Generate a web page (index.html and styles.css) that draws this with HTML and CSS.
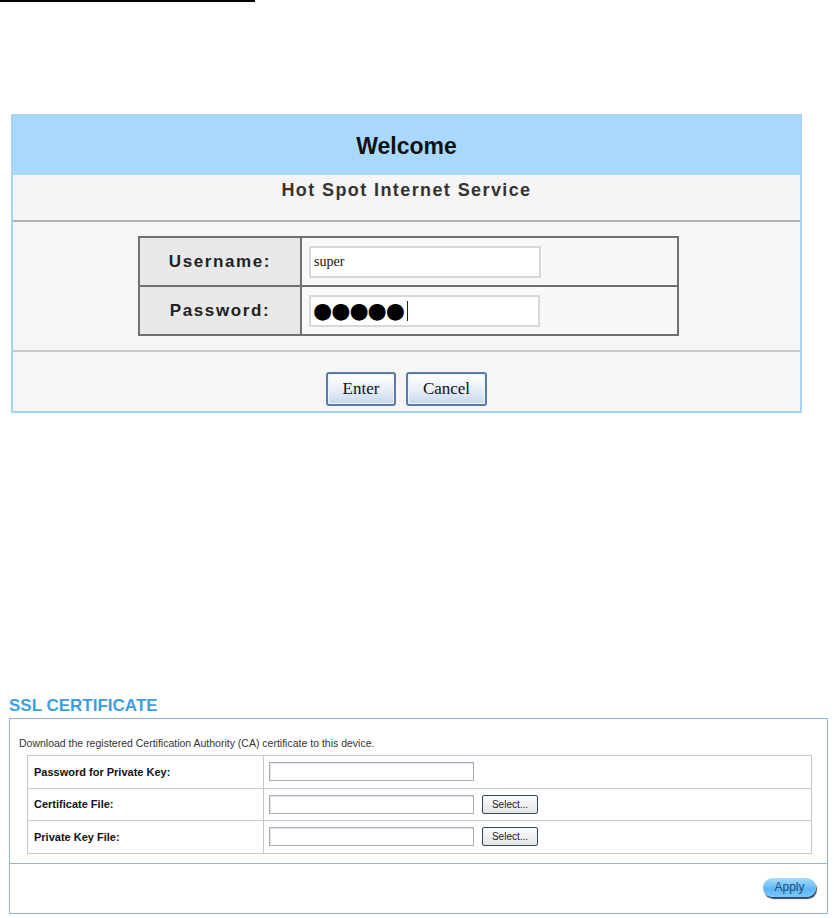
FILE: index.html
```html
<!DOCTYPE html>
<html>
  <head>
    <meta charset="UTF-8">
    <link rel="stylesheet" href="styles.css">
  </head>
  <body>
    <div class="top-rule"></div>

    <div class="login-box">
      <div class="login-head">Welcome</div>
      <div class="login-sub">Hot Spot Internet Service</div>
      <div class="login-body">
        <table class="login-table">
          <tr>
            <td class="login-label">Username:</td>
            <td class="login-field"><div class="fake-input">super</div></td>
          </tr>
          <tr>
            <td class="login-label">Password:</td>
            <td class="login-field"><div class="fake-input pw"><span class="dots">&#9679;&#9679;&#9679;&#9679;&#9679;</span><span class="caret"></span></div></td>
          </tr>
        </table>
      </div>
      <div class="login-foot">
        <button class="btn btn-enter">Enter</button>
        <button class="btn btn-cancel">Cancel</button>
      </div>
    </div>

    <div class="ssl-title">SSL CERTIFICATE</div>
    <div class="ssl-box">
      <div class="ssl-body">
        <div class="ssl-desc">Download the registered Certification Authority (CA) certificate to this device.</div>
        <table class="ssl-table">
          <tr>
            <td class="ssl-label">Password for Private Key:</td>
            <td class="ssl-field"><div class="ssl-input"></div></td>
          </tr>
          <tr>
            <td class="ssl-label">Certificate File:</td>
            <td class="ssl-field"><div class="ssl-input"></div><button class="ssl-select">Select...</button></td>
          </tr>
          <tr>
            <td class="ssl-label">Private Key File:</td>
            <td class="ssl-field"><div class="ssl-input"></div><button class="ssl-select">Select...</button></td>
          </tr>
        </table>
      </div>
      <div class="ssl-foot">
        <button class="apply">Apply</button>
      </div>
    </div>
  </body>
</html>
```

FILE: styles.css
```css
body {
  margin: 0;
  background: white;
  font-family: "Liberation Sans", Arial, sans-serif;
  color: #111;
}
.top-rule {
  width: 255px;
  height: 2px;
  background: black;
}

/* hot spot login */
.login-box {
  margin: 112px 0 0 11px;
  width: 787px;
  border: 2px solid #a6d4f7;
  background: #f6f6f6;
}
.login-head {
  height: 59px;
  line-height: 60px;
  background: #a8d8fb;
  text-align: center;
  font-size: 23px;
  font-weight: bold;
  color: #111;
}
.login-sub {
  height: 45px;
  line-height: 30px;
  text-align: center;
  font-size: 18px;
  letter-spacing: 1.4px;
  font-weight: bold;
  color: #333;
  background: #f5f5f5;
  border-bottom: 2px solid #b0b0b0;
}
.login-body {
  padding: 14px 0 14px;
  border-bottom: 2px solid #c8c8c8;
}
.login-table {
  margin: 0 auto 0 125px;
  width: 541px;
  border-collapse: collapse;
  border: 2px solid #707070;
}
.login-table td {
  border: 2px solid #707070;
  height: 47px;
  padding: 0;
}
.login-label {
  width: 160px;
  background: #e8e8e8;
  text-align: center;
  font-size: 17px;
  letter-spacing: 1.6px;
  font-weight: bold;
  color: #222;
}
.login-field {
  background: #f8f8f8;
  padding-left: 7px !important;
}
.fake-input {
  width: 225px;
  height: 28px;
  line-height: 28px;
  border: 2px solid #d8d8d8;
  background: white;
  padding-left: 3px;
  font-family: "Liberation Serif", serif;
  font-size: 14px;
  color: #111;
  display: flex;
  align-items: center;
}
.fake-input.pw {
  padding-left: 2px;
}
.dots {
  font-size: 22px;
  letter-spacing: -1px;
  color: black;
  font-family: "DejaVu Sans", sans-serif;
}
.caret {
  display: inline-block;
  width: 1px;
  height: 20px;
  background: #222;
  margin-left: 3px;
}
.login-foot {
  height: 59px;
  display: flex;
  justify-content: center;
  align-items: flex-start;
  gap: 10px;
  padding-top: 20px;
  box-sizing: border-box;
}
.btn {
  height: 34px;
  border: 2px solid #5a7aa8;
  border-radius: 3px;
  background: linear-gradient(#ffffff, #e6edf7 55%, #c6d6ec);
  font-family: "Liberation Serif", serif;
  font-size: 17px;
  color: #111;
  padding: 0;
  box-shadow: inset 0 0 0 1px #eef3fa;
}
.btn-enter {
  width: 70px;
}
.btn-cancel {
  width: 81px;
}

/* ssl certificate */
.ssl-title {
  margin: 283px 0 2px 9px;
  font-size: 17px;
  line-height: 20px;
  font-weight: bold;
  color: #3f9ee2;
}
.ssl-box {
  margin-left: 9px;
  width: 817px;
  border: 1px solid #8cb6dc;
}
.ssl-body {
  padding: 18px 15px 9px 9px;
  border-bottom: 1px solid #8cb6dc;
}
.ssl-desc {
  font-size: 10.5px;
  line-height: 12px;
  color: #333;
  margin-bottom: 6px;
}
.ssl-table {
  margin-left: 8px;
  width: 785px;
  border-collapse: collapse;
  border: 1px solid #c8c8c8;
}
.ssl-table td {
  border: 1px solid #c8c8c8;
  height: 31.5px;
  padding: 0;
}
.ssl-label {
  width: 229px;
  padding-left: 6px !important;
  font-size: 11px;
  font-weight: bold;
  color: #111;
}
.ssl-field {
  padding-left: 5px !important;
}
.ssl-field > * {
  vertical-align: middle;
}
.ssl-input {
  display: inline-block;
  width: 203px;
  height: 17px;
  border: 1px solid #a5adb8;
  background: white;
  box-shadow: inset 1px 1px 0 #e2e6ea;
}
.ssl-select {
  margin-left: 8px;
  width: 56px;
  height: 19px;
  border: 1px solid #33465e;
  border-radius: 2px;
  background: linear-gradient(#fbfbfb, #e4e4e4);
  font-family: "Liberation Sans", Arial, sans-serif;
  font-size: 10px;
  color: #222;
  padding: 0;
}
.ssl-foot {
  height: 49px;
  display: flex;
  justify-content: flex-end;
  align-items: flex-start;
  padding: 14px 11px 0 0;
  box-sizing: border-box;
}
.apply {
  width: 53px;
  height: 19px;
  border: none;
  border-radius: 10px;
  background: linear-gradient(#a6dcff, #5cb6f4 60%, #7ec8fb);
  box-shadow: 1px 2px 1px #2d4a66;
  font-family: "Liberation Sans", Arial, sans-serif;
  font-size: 12px;
  color: #1d4c78;
  padding: 0;
}
```
